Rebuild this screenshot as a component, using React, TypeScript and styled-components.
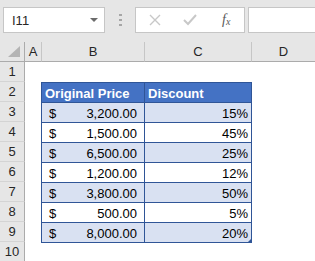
import styled, { createGlobalStyle } from "styled-components";

const GlobalStyle = createGlobalStyle`
  body {
    margin: 0;
    background: #ffffff;
    font-family: "Liberation Sans", Arial, sans-serif;
  }
`;

const prices = [
  { price: "3,200.00", discount: "15%" },
  { price: "1,500.00", discount: "45%" },
  { price: "6,500.00", discount: "25%" },
  { price: "1,200.00", discount: "12%" },
  { price: "3,800.00", discount: "50%" },
  { price: "500.00", discount: "5%" },
  { price: "8,000.00", discount: "20%" },
];

const columns = [
  { label: "A", width: 17 },
  { label: "B", width: 103 },
  { label: "C", width: 107 },
  { label: "D", width: 64 },
];

const App = () => {
  return (
    <Window>
      <GlobalStyle />
      <FormulaBar>
        <NameBox>
          <NameText>I11</NameText>
          <DropArrow />
        </NameBox>
        <Grip>
          <svg width="3" height="12" viewBox="0 0 3 12">
            <rect x="0" y="0" width="3" height="2" fill="#a6a6a6" />
            <rect x="0" y="5" width="3" height="2" fill="#a6a6a6" />
            <rect x="0" y="10" width="3" height="2" fill="#a6a6a6" />
          </svg>
        </Grip>
        <ActionBox>
          <svg width="12" height="12" viewBox="0 0 12 12">
            <path d="M1 1 L11 11 M11 1 L1 11" stroke="#c8c8c8" strokeWidth="1.4" />
          </svg>
          <svg width="14" height="12" viewBox="0 0 14 12">
            <path d="M1 6 L5 10 L13 1" stroke="#c8c8c8" strokeWidth="2" fill="none" />
          </svg>
          <Fx>
            f<sub>x</sub>
          </Fx>
        </ActionBox>
        <FormulaInput />
      </FormulaBar>

      <ColumnHeaders>
        <Corner>
          <svg width="12" height="11" viewBox="0 0 12 11">
            <path d="M12 0 L12 11 L0 11 Z" fill="#b4b4b4" />
          </svg>
        </Corner>
        {columns.map((c) => (
          <ColHeader key={c.label} $width={c.width}>
            {c.label}
          </ColHeader>
        ))}
      </ColumnHeaders>

      <SheetBody>
        <RowHeaders>
          {Array.from({ length: 10 }, (_, i) => (
            <RowHeader key={i}>{i + 1}</RowHeader>
          ))}
        </RowHeaders>
        <Canvas>
          <Spacer />
          <Table>
            <TableRow $fill="#4472c4">
              <HeadCell $width={103}>Original Price</HeadCell>
              <HeadCell $width={107}>Discount</HeadCell>
            </TableRow>
            {prices.map((p, i) => (
              <TableRow key={p.price} $fill={i % 2 === 0 ? "#d9e1f2" : "#ffffff"}>
                <PriceCell>
                  <span>$</span>
                  <span>{p.price}</span>
                </PriceCell>
                <PercentCell>{p.discount}</PercentCell>
              </TableRow>
            ))}
            <ResizeHandle />
          </Table>
        </Canvas>
      </SheetBody>
    </Window>
  );
};

export default App;

const Window = styled.div`
  width: 315px;
  height: 261px;
  overflow: hidden;
  background: #ffffff;
`;

const FormulaBar = styled.div`
  height: 42px;
  box-sizing: border-box;
  padding: 7px 0 0 3px;
  background: #e6e6e6;

  display: flex;
  align-items: flex-start;
`;

const NameBox = styled.div`
  width: 102px;
  height: 26px;
  box-sizing: border-box;
  padding: 0 6px 0 8px;
  background: #ffffff;
  border: 1px solid #c6c6c6;

  display: flex;
  align-items: center;
  justify-content: space-between;
`;

const NameText = styled.span`
  font-size: 13px;
  color: #262626;
`;

const DropArrow = styled.span`
  width: 0;
  height: 0;
  border-left: 4px solid transparent;
  border-right: 4px solid transparent;
  border-top: 4px solid #6b6b6b;
`;

const Grip = styled.div`
  width: 30px;
  height: 26px;
  display: flex;
  align-items: center;
  justify-content: center;
`;

const ActionBox = styled.div`
  width: 110px;
  height: 26px;
  box-sizing: border-box;
  padding: 0 0 0 13px;
  background: #ffffff;
  border: 1px solid #c6c6c6;

  display: flex;
  align-items: center;
  gap: 22px;
`;

const Fx = styled.span`
  margin-left: 3px;
  font-family: "Liberation Serif", "Times New Roman", serif;
  font-style: italic;
  font-size: 14px;
  color: #595959;

  sub {
    font-size: 10px;
    vertical-align: -1px;
  }
`;

const FormulaInput = styled.div`
  flex: 1;
  height: 26px;
  margin-left: 3px;
  box-sizing: border-box;
  background: #ffffff;
  border: 1px solid #c6c6c6;
  border-right: none;
`;

const ColumnHeaders = styled.div`
  height: 20px;
  background: #e6e6e6;
  display: flex;
`;

const Corner = styled.div`
  width: 25px;
  flex-shrink: 0;
  box-sizing: border-box;
  padding: 4px 4px 0 0;
  border-right: 1px solid #ababab;
  border-bottom: 1px solid #ababab;

  display: flex;
  justify-content: flex-end;
  align-items: flex-start;
`;

const ColHeader = styled.div<{ $width: number }>`
  width: ${(p) => p.$width}px;
  flex-shrink: 0;
  box-sizing: border-box;
  border-right: 1px solid #c6c6c6;
  border-bottom: 1px solid #ababab;

  display: flex;
  align-items: center;
  justify-content: center;

  font-size: 13px;
  color: #262626;
`;

const SheetBody = styled.div`
  display: flex;
`;

const RowHeaders = styled.div`
  width: 25px;
  flex-shrink: 0;
  display: flex;
  flex-direction: column;
`;

const RowHeader = styled.div`
  height: 20px;
  box-sizing: border-box;
  background: #e6e6e6;
  border-right: 1px solid #ababab;
  border-bottom: 1px solid #d4d4d4;

  display: flex;
  align-items: center;
  justify-content: center;

  font-size: 13px;
  color: #262626;
`;

const Canvas = styled.div`
  flex: 1;
  display: flex;
  flex-direction: column;
`;

const Spacer = styled.div`
  height: 20px;
`;

const Table = styled.div`
  position: relative;
  width: 211px;
  margin-left: 16px;
  box-sizing: border-box;
  border-top: 1px solid #2f5597;
  border-left: 1px solid #2f5597;

  display: flex;
  flex-direction: column;
`;

const TableRow = styled.div<{ $fill: string }>`
  height: 20px;
  background: ${(p) => p.$fill};
  display: flex;
`;

const Cell = styled.div`
  height: 20px;
  box-sizing: border-box;
  border-right: 1px solid #2f5597;
  border-bottom: 1px solid #2f5597;

  display: flex;
  align-items: center;
  padding-top: 1px;

  font-size: 13px;
  color: #000000;
`;

const HeadCell = styled(Cell)<{ $width: number }>`
  width: ${(p) => p.$width}px;
  padding-left: 3px;
  font-weight: 700;
  color: #ffffff;
`;

const PriceCell = styled(Cell)`
  width: 103px;
  padding: 1px 7px 0 7px;
  justify-content: space-between;
`;

const PercentCell = styled(Cell)`
  width: 107px;
  padding-right: 3px;
  justify-content: flex-end;
`;

const ResizeHandle = styled.span`
  position: absolute;
  right: 0;
  bottom: 1px;
  width: 0;
  height: 0;
  border-left: 4px solid transparent;
  border-bottom: 4px solid #2f5597;
`;
